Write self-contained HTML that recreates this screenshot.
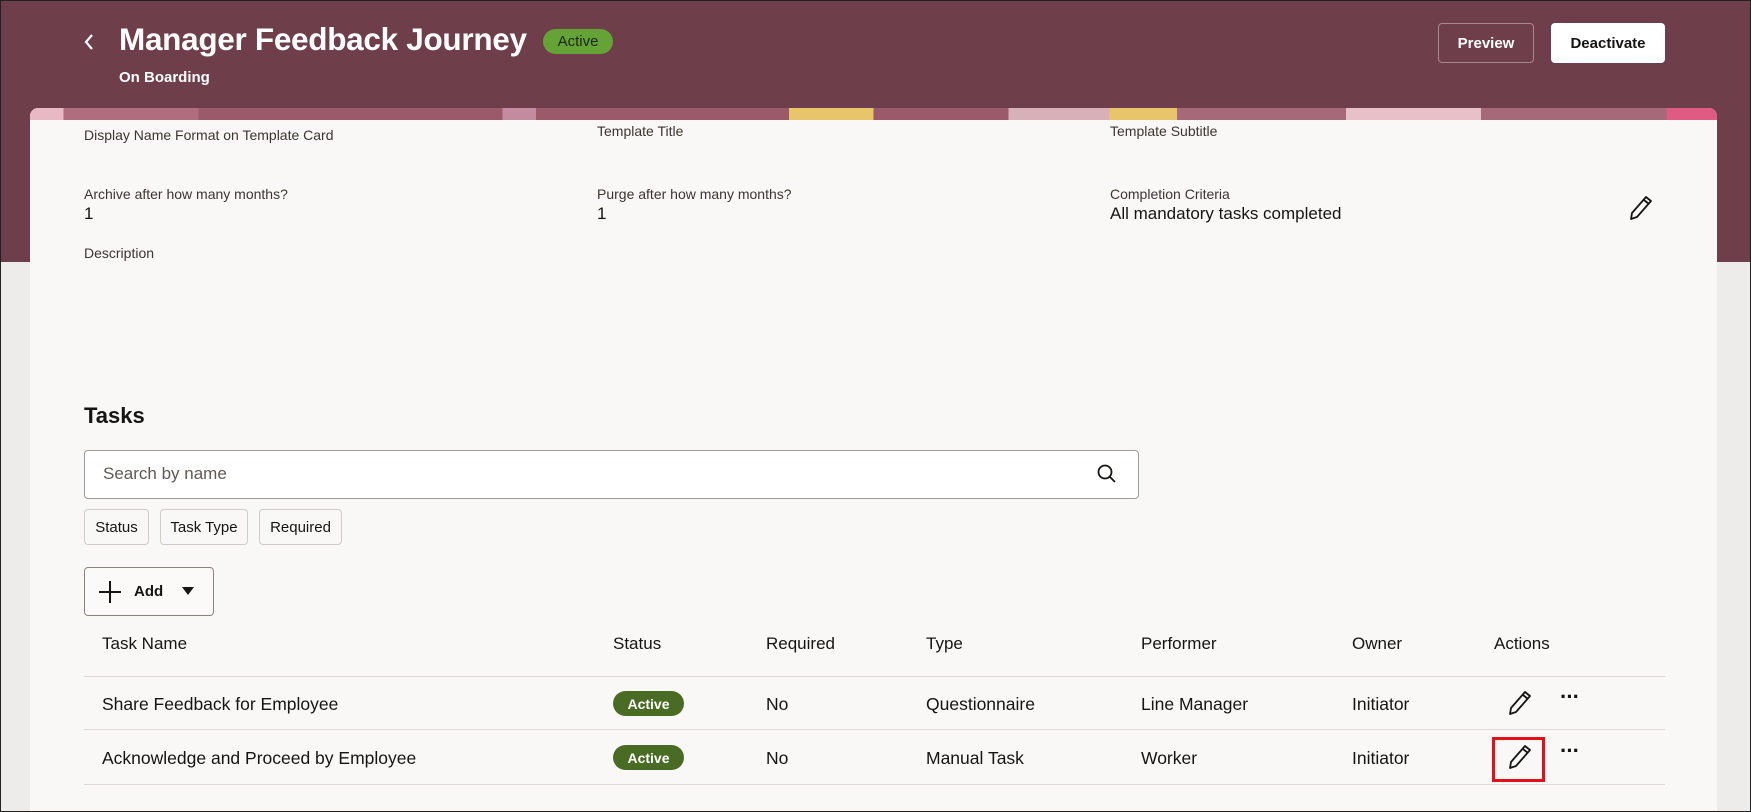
<!DOCTYPE html>
<html><head><meta charset="utf-8"><style>
*{margin:0;padding:0;box-sizing:border-box}
body{width:1751px;height:812px;overflow:hidden;font-family:"Liberation Sans",sans-serif;background:#eeecea;position:relative;color:#161513}
.frame{position:absolute;inset:0;border:1px solid #222;z-index:10;pointer-events:none}
.hdr{position:absolute;left:0;top:0;width:1751px;height:262px;background:#6e3f4a}
.card{position:absolute;left:30px;top:108px;width:1687px;height:704px;background:#f9f8f6;border-radius:8px 8px 0 0;overflow:hidden}
.strip{position:absolute;left:0;top:0;width:100%;height:12px;background:linear-gradient(90deg,#e8b8c4 0 2%,#b06d7e 2% 10%,#9a5a6a 10% 28%,#c48aa0 28% 30%,#9a5a6a 30% 45%,#e8c46a 45% 50%,#9a5a6a 50% 58%,#d8b0b8 58% 64%,#e8c46a 64% 68%,#a5697a 68% 78%,#e8c0c8 78% 86%,#a5697a 86% 97%,#e05b84 97%)}
.a{position:absolute;white-space:nowrap}
.lbl{font-size:14px;color:#3a3631}
.val{font-size:17px}
.btn{position:absolute;border-radius:4px;font-weight:bold;font-size:15px;display:flex;align-items:center;justify-content:center}
.chip{position:absolute;top:509px;height:36px;border:1px solid #cfcbc6;border-radius:4px;font-size:15px;display:flex;align-items:center;justify-content:center;background:#f9f8f6}
.th{font-size:17px;top:634px}
.td{font-size:17.5px}
.line{position:absolute;left:84px;width:1581px;height:1px;background:#dcd8d3}
.pill{position:absolute;width:71px;height:25px;border-radius:13px;background:#4a6b23;color:#fff;font-size:14px;font-weight:bold;display:flex;align-items:center;justify-content:center}
</style></head><body>
<div class="hdr"></div>
<div class="card"><div class="strip"></div></div>
<svg class="a" style="left:82px;top:32px" width="14" height="20" viewBox="0 0 14 20"><path d="M10 3 L4 10 L10 17" fill="none" stroke="#fff" stroke-width="2.2"/></svg>
<div class="a" style="left:119px;top:21px;font-size:31.5px;font-weight:bold;color:#fff;letter-spacing:-0.3px">Manager Feedback Journey</div>
<div class="a" style="left:543px;top:29px;width:70px;height:25px;border-radius:13px;background:#65a336;color:#1a2a0c;font-size:15px;display:flex;align-items:center;justify-content:center">Active</div>
<div class="a" style="left:119px;top:69px;font-size:15px;font-weight:bold;color:#fff">On Boarding</div>
<div class="btn" style="left:1438px;top:23px;width:96px;height:40px;border:1px solid #a88890;color:#fff">Preview</div>
<div class="btn" style="left:1551px;top:23px;width:114px;height:40px;background:#fff;color:#161513">Deactivate</div>

<div class="a lbl" style="left:84px;top:127px">Display Name Format on Template Card</div>
<div class="a lbl" style="left:597px;top:123px">Template Title</div>
<div class="a lbl" style="left:1110px;top:123px">Template Subtitle</div>
<div class="a lbl" style="left:84px;top:186px">Archive after how many months?</div>
<div class="a val" style="left:84px;top:204px">1</div>
<div class="a lbl" style="left:597px;top:186px">Purge after how many months?</div>
<div class="a val" style="left:597px;top:204px">1</div>
<div class="a lbl" style="left:1110px;top:186px">Completion Criteria</div>
<div class="a val" style="left:1110px;top:204px">All mandatory tasks completed</div>
<svg class="a" style="left:1626px;top:194px" width="28" height="28" viewBox="0 0 28 28"><path d="M5 25 L6 19 L20 3 L25 7 L11 23 Z M18 6 L23 10" fill="none" stroke="#161513" stroke-width="1.8" stroke-linejoin="round"/></svg>
<div class="a lbl" style="left:84px;top:245px">Description</div>

<div class="a" style="left:84px;top:403px;font-size:22px;font-weight:bold">Tasks</div>
<div class="a" style="left:84px;top:450px;width:1055px;height:49px;border:1px solid #a09a94;border-radius:4px;background:#fff"></div>
<div class="a" style="left:103px;top:464px;font-size:17px;color:#5f5a54">Search by name</div>
<svg class="a" style="left:1096px;top:463px" width="22" height="22" viewBox="0 0 22 22"><circle cx="9" cy="9" r="6.5" fill="none" stroke="#161513" stroke-width="1.8"/><path d="M14 14 L19 19" stroke="#161513" stroke-width="1.8"/></svg>
<div class="chip" style="left:84px;width:65px">Status</div>
<div class="chip" style="left:160px;width:88px">Task Type</div>
<div class="chip" style="left:259px;width:83px">Required</div>
<div class="a" style="left:84px;top:567px;width:130px;height:49px;border:1px solid #8a847e;border-radius:4px;background:#fbfaf9"></div>
<svg class="a" style="left:98px;top:580px" width="24" height="24" viewBox="0 0 24 24"><path d="M12 1 V23 M1 12 H23" stroke="#161513" stroke-width="2"/></svg>
<div class="a" style="left:134px;top:583px;font-size:15px;font-weight:bold">Add</div>
<svg class="a" style="left:181px;top:586px" width="14" height="10" viewBox="0 0 14 10"><path d="M1 1 H13 L7 9 Z" fill="#161513"/></svg>

<div class="a th" style="left:102px">Task Name</div>
<div class="a th" style="left:613px">Status</div>
<div class="a th" style="left:766px">Required</div>
<div class="a th" style="left:926px">Type</div>
<div class="a th" style="left:1141px">Performer</div>
<div class="a th" style="left:1352px">Owner</div>
<div class="a th" style="left:1494px">Actions</div>
<div class="line" style="top:676px"></div>
<div class="a td" style="left:102px;top:694px">Share Feedback for Employee</div>
<div class="pill" style="left:613px;top:691px">Active</div>
<div class="a td" style="left:766px;top:694px">No</div>
<div class="a td" style="left:926px;top:694px">Questionnaire</div>
<div class="a td" style="left:1141px;top:694px">Line Manager</div>
<div class="a td" style="left:1352px;top:694px">Initiator</div>
<svg class="a" style="left:1505px;top:689px" width="28" height="28" viewBox="0 0 28 28"><path d="M5 25 L6 19 L20 3 L25 7 L11 23 Z M18 6 L23 10" fill="none" stroke="#161513" stroke-width="1.8" stroke-linejoin="round"/></svg>
<div class="a" style="left:1560px;top:684px;font-size:22px;font-weight:bold;letter-spacing:-1px">···</div>
<div class="line" style="top:729px"></div>
<div class="a td" style="left:102px;top:748px">Acknowledge and Proceed by Employee</div>
<div class="pill" style="left:613px;top:745px">Active</div>
<div class="a td" style="left:766px;top:748px">No</div>
<div class="a td" style="left:926px;top:748px">Manual Task</div>
<div class="a td" style="left:1141px;top:748px">Worker</div>
<div class="a td" style="left:1352px;top:748px">Initiator</div>
<svg class="a" style="left:1505px;top:743px" width="28" height="28" viewBox="0 0 28 28"><path d="M5 25 L6 19 L20 3 L25 7 L11 23 Z M18 6 L23 10" fill="none" stroke="#161513" stroke-width="1.8" stroke-linejoin="round"/></svg>
<div class="a" style="left:1560px;top:738px;font-size:22px;font-weight:bold;letter-spacing:-1px">···</div>
<div class="a" style="left:1492px;top:737px;width:53px;height:45px;border:3px solid #e3101c"></div>
<div class="line" style="top:784px"></div>
<div class="frame"></div>
</body></html>
